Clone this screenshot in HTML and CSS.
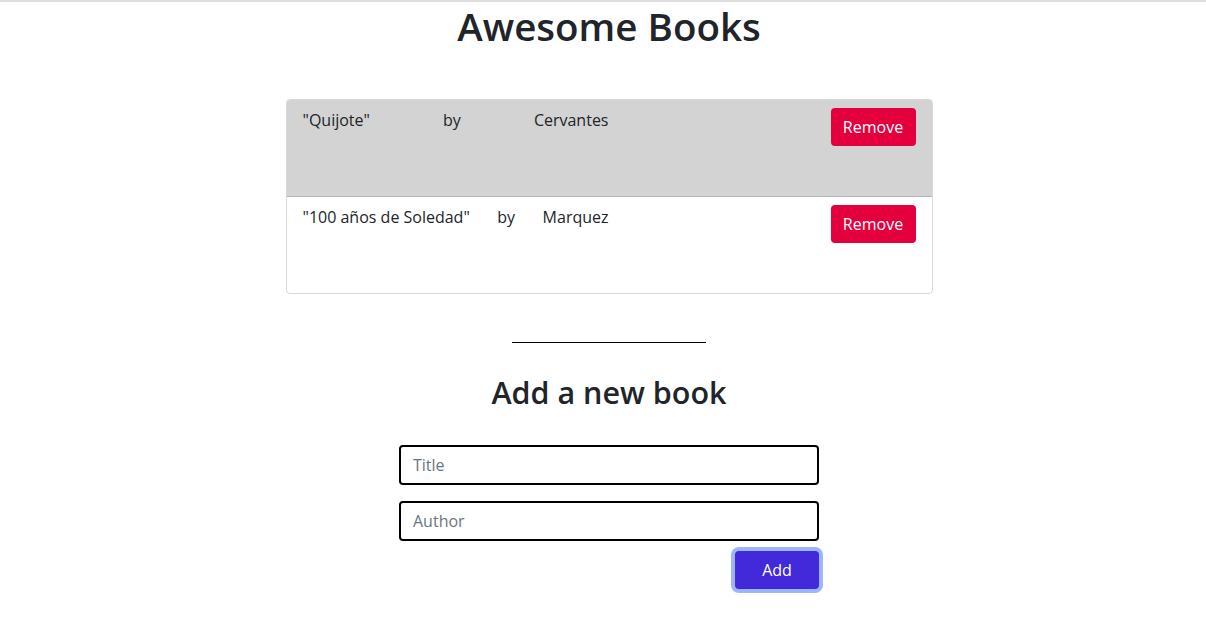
FILE: index.html
```html
<!DOCTYPE html>
<html lang="en">
<head>
<meta charset="utf-8">
<title>Awesome Books</title>
<link rel="stylesheet" href="styles.css">
</head>
<body>
<main class="page">
  <h1 class="title">Awesome Books</h1>
  <ul class="book-list">
    <li class="book-row book-row-alt">
      <div class="book-info">
        <p class="book-text">"Quijote"</p>
        <p class="book-text">by</p>
        <p class="book-text">Cervantes</p>
      </div>
      <button class="btn-remove" type="button">Remove</button>
    </li>
    <li class="book-row">
      <div class="book-info">
        <p class="book-text">"100 años de Soledad"</p>
        <p class="book-text">by</p>
        <p class="book-text">Marquez</p>
      </div>
      <button class="btn-remove" type="button">Remove</button>
    </li>
  </ul>
  <hr class="divider">
  <h2 class="subtitle">Add a new book</h2>
  <form class="book-form">
    <input class="field" type="text" placeholder="Title">
    <input class="field" type="text" placeholder="Author">
    <div class="form-actions">
      <button class="btn-add" type="button">Add</button>
    </div>
  </form>
</main>
</body>
</html>
```

FILE: styles.css
```css
* {
  box-sizing: border-box;
}

html, body {
  margin: 0;
  background: #fff;
}

body {
  border-top: 2px solid #dedede;
  padding-left: 12px;
  font-family: "Open Sans", "Noto Sans", sans-serif;
  color: #212529;
  font-size: 16px;
}

.page {
  display: flex;
  flex-direction: column;
  align-items: center;
  padding-bottom: 40px;
}

.title {
  margin: 0;
  font-size: 38.5px;
  font-weight: 600;
  line-height: 48px;
  text-align: center;
}

.book-list {
  list-style: none;
  margin: 49px 0 0;
  padding: 0;
  width: 647px;
  border: 1px solid rgba(0, 0, 0, 0.15);
  border-radius: 4px;
  overflow: hidden;
}

.book-row {
  display: flex;
  justify-content: space-between;
  align-items: flex-start;
  height: 97px;
  padding: 8px 16px 8px 16px;
  border-bottom: 1px solid rgba(0, 0, 0, 0.15);
}

.book-row:last-child {
  border-bottom: none;
  height: 96px;
}

.book-row-alt {
  background: #d3d3d3;
}

.book-info {
  display: flex;
  justify-content: space-between;
  width: 306px;
}

.book-text {
  margin: 0;
  line-height: 24px;
  color: #212529;
}

.btn-remove {
  width: 85px;
  height: 38px;
  border: none;
  border-radius: 4px;
  background: #e4003c;
  color: #fff;
  font-family: inherit;
  font-size: 16px;
  line-height: 24px;
  padding: 0;
}

.divider {
  width: 194px;
  margin: 48px 0 0;
  border: none;
  border-top: 1px solid #000;
}

.subtitle {
  margin: 30px 0 0;
  font-size: 30.5px;
  font-weight: 600;
  line-height: 38px;
}

.book-form {
  width: 420px;
  margin-top: 34px;
  display: flex;
  flex-direction: column;
  gap: 16px;
}

.field {
  height: 40px;
  width: 100%;
  border: 2px solid #000;
  border-radius: 4px;
  padding: 6px 12px;
  font-family: inherit;
  font-size: 16px;
  color: #212529;
}

.field::placeholder {
  color: #6c757d;
}

.form-actions {
  display: flex;
  justify-content: flex-end;
  margin-top: -6px;
}

.btn-add {
  width: 84px;
  height: 38px;
  border: none;
  border-radius: 4px;
  background: #4229d9;
  color: #fff;
  font-family: inherit;
  font-size: 16px;
  box-shadow: 0 0 0 4px #9db5fb;
}
```
